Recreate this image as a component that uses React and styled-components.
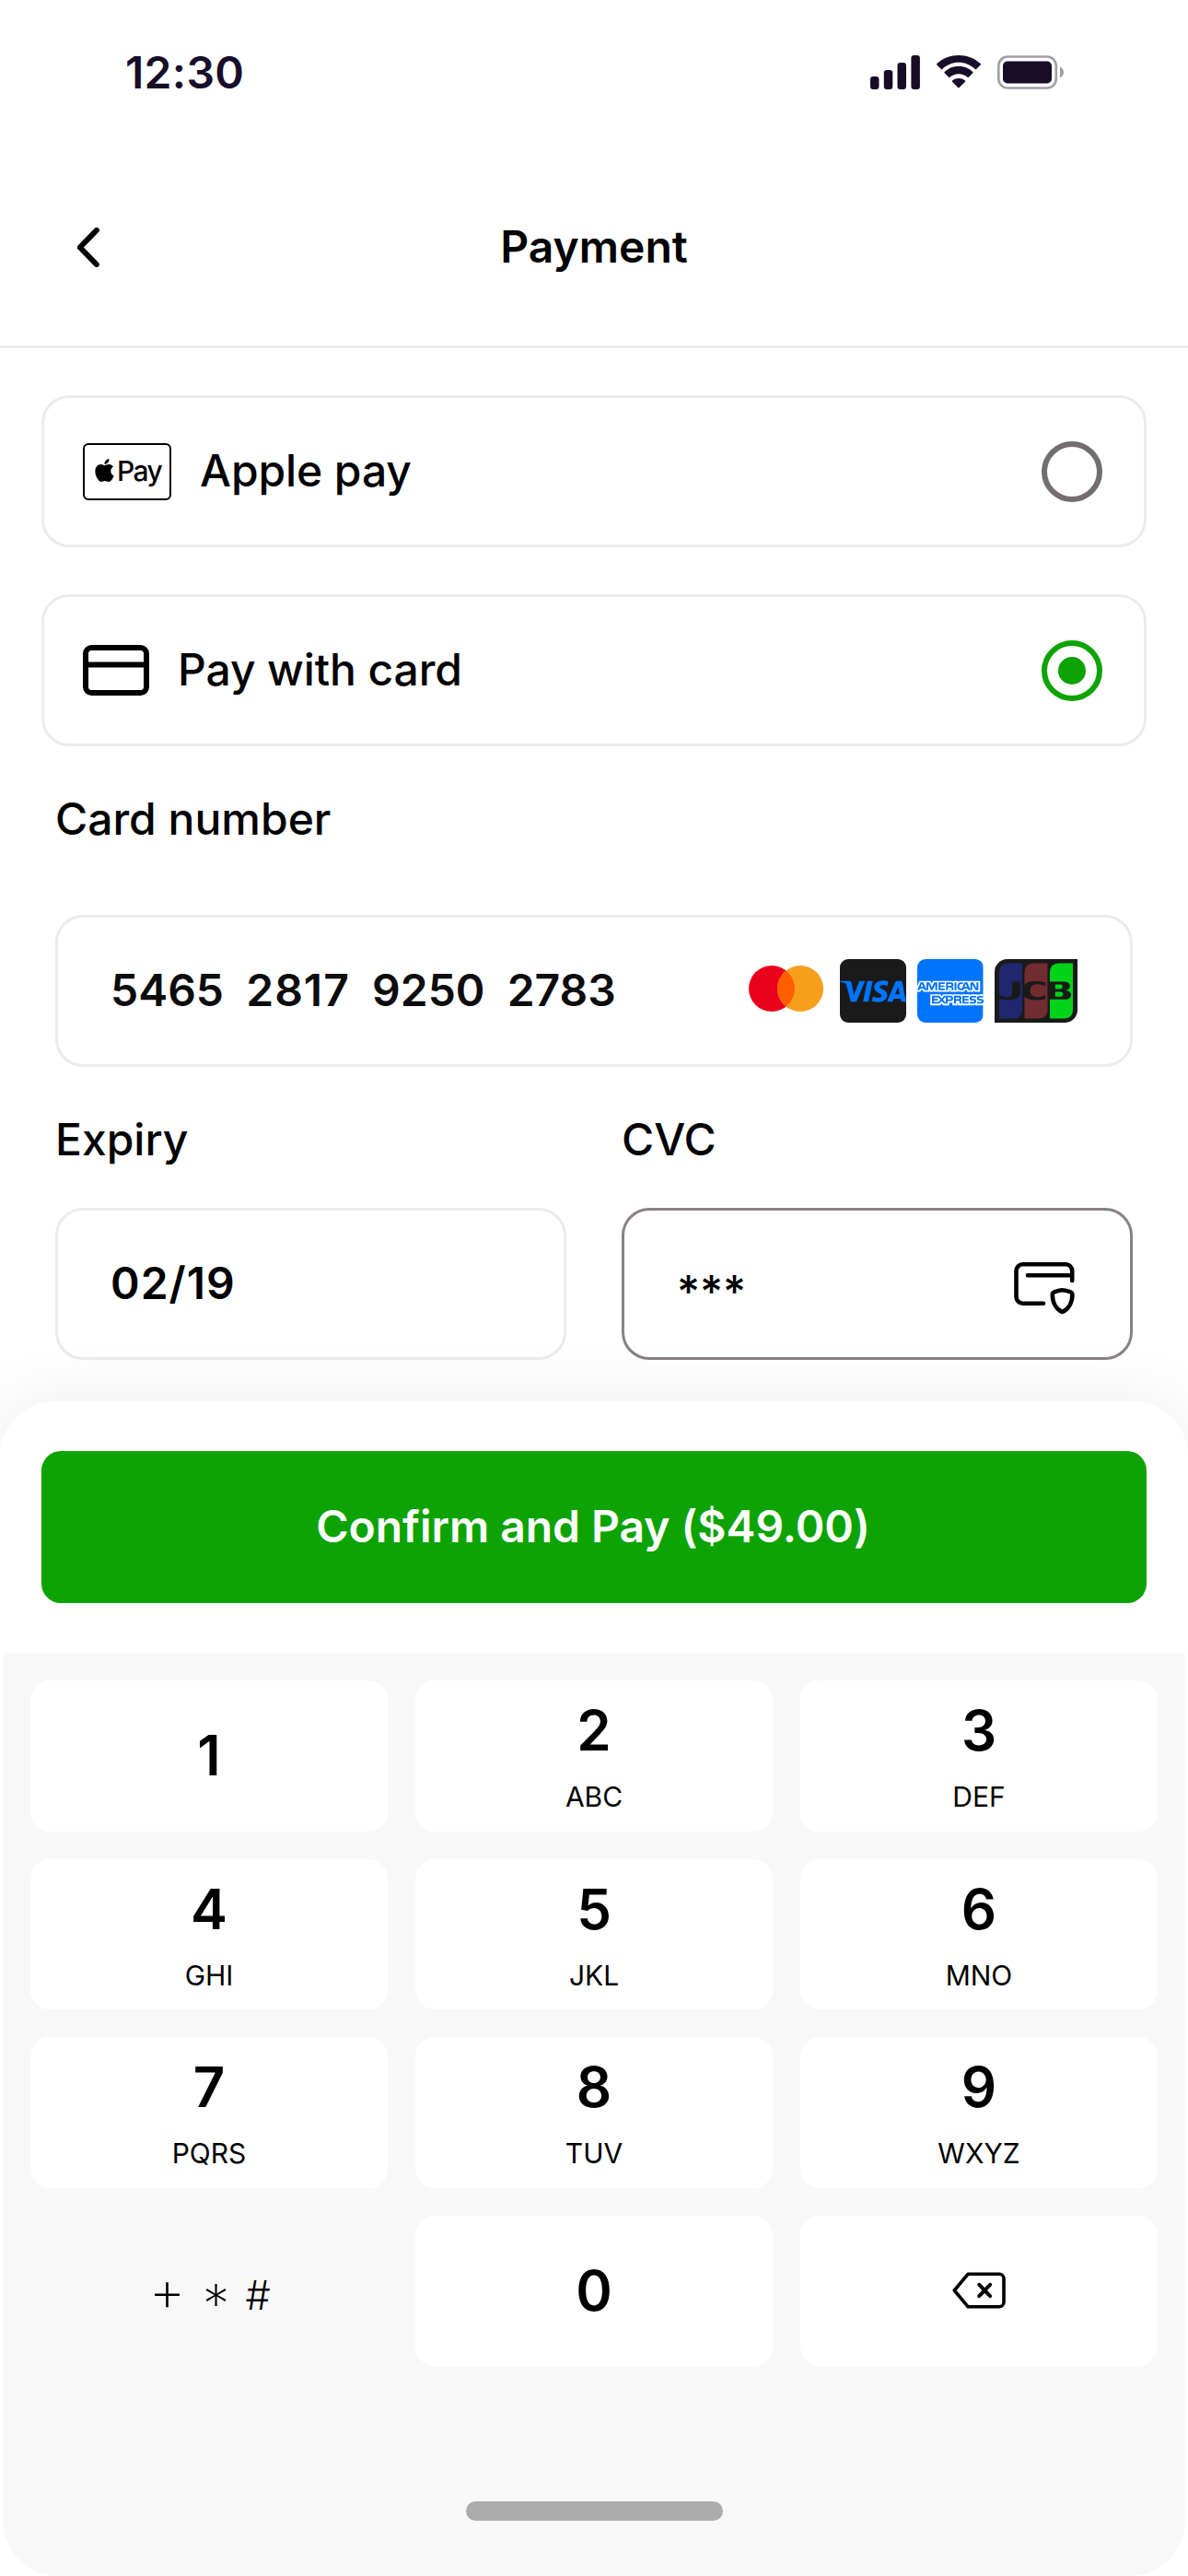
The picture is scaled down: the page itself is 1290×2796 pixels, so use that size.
import React from "react";
import styled, { createGlobalStyle } from "styled-components";
import { SiAmericanexpress, SiApple, SiJcb, SiVisa } from "react-icons/si";

const GlobalStyle = createGlobalStyle`
  *, *::before, *::after { box-sizing: border-box; }
  body { margin: 0; background: #fff; }
  button { font: inherit; color: inherit; border: 0; padding: 0; background: none; }
`;

const Screen = styled.div`
  display: flex;
  flex-direction: column;
  width: 1290px;
  height: 2796px;
  overflow: hidden;
  background: #fff;
  color: #000;
  font-family: Inter, "Liberation Sans", sans-serif;
  font-size: 48px;
  line-height: 58px;
`;

const StatusBar = styled.div`
  display: flex;
  justify-content: space-between;
  align-items: center;
  height: 159px;
  padding: 0 135px 2px 136px;
  color: #170d29;
`;

const Clock = styled.span`
  font-weight: 600;
  letter-spacing: 0.3px;
`;

const StatusIcons = styled.div`
  display: flex;
  align-items: center;
  gap: 18px;
`;

const Header = styled.header`
  display: grid;
  grid-template-columns: 200px 1fr 200px;
  align-items: center;
  height: 219px;
  padding-top: 2px;
  border-bottom: 3px solid #ebebeb;
`;

const BackButton = styled.button`
  display: flex;
  padding-left: 84px;
`;

const Title = styled.h1`
  margin: 0;
  font-size: 48px;
  font-weight: 600;
  text-align: center;
`;

const Methods = styled.section`
  display: flex;
  flex-direction: column;
  gap: 51px;
  padding: 51px 45px 0;
`;

const Method = styled.div`
  display: flex;
  align-items: center;
  gap: 31px;
  height: 165px;
  padding: 0 45px 0 42px;
  border: 3px solid #ebebeb;
  border-radius: 30px;
  font-weight: 500;
`;

const MethodName = styled.span`
  flex: 1;
  padding-bottom: 2px;
  letter-spacing: -0.1px;
`;

const ApplePayBadge = styled.span`
  display: flex;
  align-items: center;
  gap: 1px;
  width: 96px;
  height: 62px;
  padding: 0 0 2px 9px;
  border: 2px solid #000;
  border-radius: 6px;
  font-size: 30px;
  line-height: 36px;
  letter-spacing: -1.6px;
`;

const Radio = styled.span`
  display: flex;
  align-items: center;
  justify-content: center;
  width: 66px;
  height: 66px;
  border: 6px solid ${(p) => (p.$on ? "#0da302" : "#736d6d")};
  border-radius: 50%;

  &::after {
    content: "";
    width: 30px;
    height: 30px;
    border-radius: 50%;
    background: ${(p) => (p.$on ? "#0da302" : "transparent")};
  }
`;

const Form = styled.section`
  display: flex;
  flex-direction: column;
  gap: 50px;
  padding: 50px 60px 0;
`;

const Field = styled.label`
  display: flex;
  flex: 1;
  flex-direction: column;
  gap: ${(p) => p.$gap}px;
`;

const Label = styled.span`
  font-weight: 500;
`;

const Input = styled.span`
  display: flex;
  align-items: center;
  justify-content: space-between;
  height: 165px;
  padding: 0 57px;
  border: 3px solid ${(p) => (p.$focused ? "#888282" : "#ebebeb")};
  border-radius: 30px;
  font-weight: 600;
`;

const Value = styled.span`
  padding-bottom: 2px;
  color: ${(p) => p.$color || "#000"};
  white-space: pre;
`;

const Digits = styled.span`
  letter-spacing: ${(p) => (p.children.includes("1") ? "1px" : "0")};
`;

const Mask = styled.span`
  padding-top: 17px;
  font-weight: 500;
`;

const FieldRow = styled.div`
  display: flex;
  gap: 60px;
`;

const Brands = styled.span`
  display: flex;
  align-items: center;
  gap: 12px;
`;

const MastercardMark = styled.svg`
  margin: 0 6px 6px 0;
`;

const BrandTile = styled.span`
  display: flex;
  align-items: center;
  justify-content: center;
  width: 72px;
  height: 69px;
  overflow: hidden;
  border-radius: 9px;
  background: ${(p) => p.$bg};
  color: ${(p) => p.$fg};

  svg { flex: none; }
`;

const SecureMark = styled.svg`
  margin: 9px 3px 0 0;
`;

const Sheet = styled.section`
  display: flex;
  flex: 1;
  flex-direction: column;
  margin-top: 45px;
  border-radius: 60px 60px 0 0;
  background: #fff;
  box-shadow: 0 0 75px rgba(0, 0, 0, 0.08);
`;

const Action = styled.div`
  padding: 54px 45px;
`;

const ConfirmButton = styled.button`
  display: block;
  width: 100%;
  height: 165px;
  padding: 0 2px 2px 0;
  border-radius: 21px;
  background: #0da302;
  color: #fff;
  font-weight: 600;
  letter-spacing: -0.04px;
`;

const Keyboard = styled.div`
  display: flex;
  flex: 1;
  flex-direction: column;
  justify-content: space-between;
  align-items: center;
  margin: 0 3px;
  padding: 30px 30px 60px;
  border-radius: 0 0 60px 60px;
  background: #f8f8f8;
`;

const Keys = styled.div`
  display: grid;
  grid-template-columns: repeat(3, 388px);
  grid-auto-rows: 163.5px;
  gap: 30px;
`;

const Key = styled.button`
  display: flex;
  flex-direction: column;
  align-items: center;
  justify-content: center;
  border-radius: 21px;
  background: ${(p) => (p.$flat ? "transparent" : "#fff")};
`;

const Digit = styled.span`
  font-size: 60px;
  font-weight: 600;
  line-height: 71px;
`;

const Letters = styled.span`
  margin-top: 18px;
  font-size: 30px;
  font-weight: 400;
  line-height: 36px;
`;

const Symbols = styled.span`
  display: grid;
  grid-template-columns: 53px 53px 38px;
  align-items: center;
  justify-items: center;
  padding-top: 10px;
  font-feature-settings: "case";
`;

const Sign = styled.span`
  font-size: ${(p) => p.$size}px;
  font-weight: ${(p) => p.$weight || 200};
  line-height: 60px;
`;

const HomeIndicator = styled.div`
  width: 279px;
  height: 21px;
  border-radius: 11px;
  background: #acacac;
`;

const SignalIcon = () => (
  <svg width="54" height="37" viewBox="0 0 54 37" fill="currentColor">
    <rect x="0" y="23" width="9.5" height="14" rx="3.2" />
    <rect x="14.8" y="16" width="9.5" height="21" rx="3.2" />
    <rect x="29.5" y="8" width="9.5" height="29" rx="3.2" />
    <rect x="44.4" y="0" width="9.5" height="37" rx="3.2" />
  </svg>
);

const WifiIcon = () => (
  <svg width="48" height="37" viewBox="0 0 48 37" fill="currentColor">
    <path d="M24 7.8c6.7 0 13 2.6 17.8 7.2.4.4 1 .3 1.3 0l4.500-4.500a1 1 0 0 0 0-1.500C34.400-3 13.600-3 .4 9a1 1 0 0 0 0 1.500L4.900 15c.3.3.9.4 1.300 0C11 10.400 17.300 7.800 24 7.800Z" />
    <path d="M24 20.200c3.600 0 6.900 1.300 9.500 3.600.4.4 1 .4 1.400 0l4.400-4.500a1 1 0 0 0 0-1.400c-8.600-8.100-22-8.100-30.600 0a1 1 0 0 0 0 1.400l4.400 4.500c.4.4 1 .4 1.400 0 2.600-2.300 6-3.600 9.500-3.600Z" />
    <path d="M31 28.800c.4-.4.4-1 0-1.400-4-3.300-10-3.300-14 0a1 1 0 0 0 0 1.400l6.300 6.300c.4.4 1 .4 1.400 0L31 28.800Z" />
  </svg>
);

const BatteryIcon = () => (
  <svg width="72" height="37" viewBox="0 0 72 37" fill="currentColor">
    <rect x="1.300" y="1.500" width="62.500" height="34" rx="10" fill="none" stroke="currentColor" strokeWidth="2.600" opacity=".4" />
    <path d="M68 12.500v12c2.400-1 4-3.400 4-6s-1.600-5-4-6Z" opacity=".4" />
    <rect x="6" y="6.500" width="53" height="24" rx="5" />
  </svg>
);

const BackIcon = () => (
  <svg width="24" height="43" viewBox="0 0 24 43" fill="none" stroke="currentColor" strokeWidth="6" strokeLinecap="round" strokeLinejoin="round">
    <path d="M20.800 3 2.800 21.500 20.800 40" />
  </svg>
);

const CardIcon = () => (
  <svg width="72" height="55" viewBox="0 0 72 55" fill="none" stroke="currentColor" strokeWidth="6">
    <rect x="3" y="3" width="66" height="49" rx="6.500" />
    <path d="M3 21.500h66" />
  </svg>
);

const SecureCardIcon = () => (
  <SecureMark width="66" height="57" viewBox="0 0 66 57" fill="none" stroke="#000" strokeWidth="4.600" strokeLinecap="round" strokeLinejoin="round">
    <path d="M32 44.700H9.500a7 7 0 0 1-7-7V9.300a7 7 0 0 1 7-7h46.700a7 7 0 0 1 7 7V20M15 14.300h48" />
    <path d="M52.500 30.200c-2.700 0-5.600 1-8.200 1.900-1.700.6-2.500 1.500-2.500 3.300 0 8.600 4.200 15.500 10.700 18.600 6.600-3.100 10.900-10 10.900-18.600 0-1.800-.8-2.700-2.500-3.300-2.700-.9-5.700-1.900-8.400-1.900Z" />
  </SecureMark>
);

const BackspaceIcon = () => (
  <svg width="58" height="40" viewBox="0 0 58 40" fill="none" stroke="currentColor" strokeWidth="3.600" strokeLinecap="round" strokeLinejoin="round">
    <path d="M2.300 20 17.200 2.200H51a5 5 0 0 1 5 5v25.600a5 5 0 0 1-5 5H17.200L2.300 20Z" />
    <path d="m29.300 13.800 11.800 12.400m0-12.400L29.300 26.200" strokeWidth="4" />
  </svg>
);

const Mastercard = () => (
  <MastercardMark width="81" height="50" viewBox="0 0 81 50">
    <circle cx="25" cy="25" r="25" fill="#eb001b" />
    <circle cx="56" cy="25" r="25" fill="#f79e1b" />
    <path d="M40.500 5.400a25 25 0 0 1 0 39.200 25 25 0 0 1 0-39.200Z" fill="#ff5f00" />
  </MastercardMark>
);

const PILLAR = "M10 0H25V50Q25 60 15 60H0V10Q0 0 10 0Z";

const Jcb = () => (
  <svg width="90" height="69" viewBox="0 0 90 69">
    <path d="M14 0H90V55A14 14 0 0 1 76 69H0V14A14 14 0 0 1 14 0Z" fill="#1a1a1a" />
    <path d={PILLAR} transform="translate(5 4.500)" fill="#1f286f" />
    <path d={PILLAR} transform="translate(32.500 4.500)" fill="#702c2f" />
    <path d={PILLAR} transform="translate(60 4.500)" fill="#00d318" />
    <SiJcb x="5" y="-4.800" size={78} color="#1a1a1a" />
  </svg>
);

const CARD_NUMBER = ["5465", "2817", "9250", "2783"];

const KEYS = [
  ["1"],
  ["2", "ABC"],
  ["3", "DEF"],
  ["4", "GHI"],
  ["5", "JKL"],
  ["6", "MNO"],
  ["7", "PQRS"],
  ["8", "TUV"],
  ["9", "WXYZ"],
];

export default function App() {
  return (
    <Screen>
      <GlobalStyle />
      <StatusBar>
        <Clock>12:30</Clock>
        <StatusIcons>
          <SignalIcon />
          <WifiIcon />
          <BatteryIcon />
        </StatusIcons>
      </StatusBar>

      <Header>
        <BackButton aria-label="Back"><BackIcon /></BackButton>
        <Title>Payment</Title>
      </Header>

      <Methods>
        <Method>
          <ApplePayBadge><SiApple size={25} />Pay</ApplePayBadge>
          <MethodName>Apple pay</MethodName>
          <Radio />
        </Method>
        <Method>
          <CardIcon />
          <MethodName>Pay with card</MethodName>
          <Radio $on />
        </Method>
      </Methods>

      <Form>
        <Field $gap={75}>
          <Label>Card number</Label>
          <Input>
            <Value $color="#0c0c0c">
              {CARD_NUMBER.map((group, i) => (
                <React.Fragment key={group}>
                  {i > 0 && "  "}
                  <Digits>{group}</Digits>
                </React.Fragment>
              ))}
            </Value>
            <Brands>
              <Mastercard />
              <BrandTile $bg="#1a1a1a" $fg="#0074ff"><SiVisa size={72} /></BrandTile>
              <BrandTile $bg="#fff" $fg="#0074ff"><SiAmericanexpress size={72} /></BrandTile>
              <Jcb />
            </Brands>
          </Input>
        </Field>
        <FieldRow>
          <Field $gap={45}>
            <Label>Expiry</Label>
            <Input><Value><Digits>02/19</Digits></Value></Input>
          </Field>
          <Field $gap={45}>
            <Label>CVC</Label>
            <Input $focused>
              <Mask>***</Mask>
              <SecureCardIcon />
            </Input>
          </Field>
        </FieldRow>
      </Form>

      <Sheet>
        <Action>
          <ConfirmButton>Confirm and Pay ($49.00)</ConfirmButton>
        </Action>
        <Keyboard>
          <Keys>
            {KEYS.map(([digit, letters]) => (
              <Key key={digit}>
                <Digit>{digit}</Digit>
                {letters && <Letters>{letters}</Letters>}
              </Key>
            ))}
            <Key $flat>
              <Symbols>
                <Sign $size={62}>+</Sign>
                <Sign $size={55}>*</Sign>
                <Sign $size={43} $weight={300}>#</Sign>
              </Symbols>
            </Key>
            <Key><Digit>0</Digit></Key>
            <Key aria-label="Delete"><BackspaceIcon /></Key>
          </Keys>
          <HomeIndicator />
        </Keyboard>
      </Sheet>
    </Screen>
  );
}
